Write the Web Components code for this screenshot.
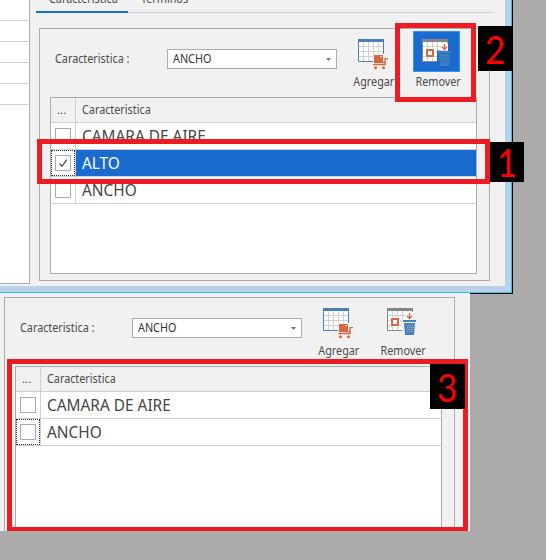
<!DOCTYPE html>
<html lang="es"><head><meta charset="utf-8"><title>Caracteristicas</title>
<style>
html,body{margin:0;height:100%;overflow:hidden;background:#ababab}
body{font-family:"Noto Sans","Open Sans",sans-serif;color:#4c4c4c}
</style></head><body>
<capture-board></capture-board>
<script>
const define=(name,html,init)=>customElements.define(name,class extends HTMLElement{
  connectedCallback(){
    if(this.shadowRoot)return;
    const r=this.attachShadow({mode:'open'});
    r.innerHTML=html;
    if(init)init(this,r);
  }
});

const sheet=(frame)=>`<rect x=".5" y="2" width="25" height="20.5" fill="#fff"/>
<path d="M5.5 3v19M10.5 3v19M15.5 3v19M20.5 3v19M1 7.5h24M1 12.5h24M1 17.5h24" stroke="#d0d0d0"/>
<path d="M.5 3V22.5H25.5V3" fill="none" stroke="${frame}"/><rect width="26" height="3" fill="${frame}"/>`;

define('tight-text',`<style>:host{display:block;width:max-content;font-size:12px;white-space:nowrap;transform:scaleX(.9);transform-origin:var(--origin,0 50%)}</style><slot></slot>`);

define('icon-add',`<style>:host{display:block;width:32px;height:32px}svg{display:block}</style>
<svg width="32" height="32">${sheet('#4a80b8')}
<path d="M15 15h12v4h4v12H15z" fill="var(--icon-back,#f1f1f1)"/>
<path d="M16 16h9v7.5h-9z" fill="#d96542"/><path d="M22 17h2v1h-2z" fill="#fff"/>
<path d="M30 19.6h-2.9V25.6H15M16 23.5h11" fill="none" stroke="#d96542" stroke-width="1.4"/>
<circle cx="17.5" cy="28.7" r="1.5" fill="#d96542"/><circle cx="25.5" cy="28.7" r="1.5" fill="#d96542"/></svg>`);

define('icon-remove',`<style>:host{display:block;width:32px;height:32px}svg{display:block}</style>
<svg width="32" height="32">${sheet('#858585')}
<path d="M3 9h10v10H3z" fill="#fff"/><rect x="5" y="11" width="6" height="6" fill="#fff" stroke="#d96542" stroke-width="2"/>
<path d="M19 4h7v8h-7z" fill="#fff"/>
<path d="M15 11.5h15v11l-2 5H17l-2-5z" fill="var(--icon-back,#f1f1f1)"/><path d="M19 8h7v3.5h-7z" fill="#fff"/>
<path d="M22.5 5v5.5M19.9 7.8l2.6 2.6L25.1 7.8" stroke="#d96542" stroke-width="1.4" fill="none"/>
<path d="M16 12h13v2H16zM17 15h11l-1 12h-9z" fill="var(--bin,#4a80b8)"/>
<path d="M19 17.5h8M20 19.5h7M19 21.5h8M20 23.5h6" stroke="var(--dots,#a9c6df)" stroke-dasharray="1 1" stroke-width=".8"/></svg>`);

define('tool-button',`<style>
:host{display:flex;flex-direction:column;align-items:center;width:64px}
.face{box-sizing:border-box;width:47px;height:41px;padding:7px 0 0 8px;border:1px solid transparent}
:host([active]) .face{background:#1a6bd0;border-color:#3d93f0}
:host([active]){--icon-back:#1a6bd0;--bin:#3e7fbd;--dots:#2268b4}
.text{height:18px;line-height:18px;margin-top:1px;padding-left:4px;white-space:nowrap;--origin:50% 50%}
</style><div class="face"><slot name="icon"></slot></div><div class="text"><tight-text><slot></slot></tight-text></div>`);

define('combo-box',`<style>
:host{box-sizing:border-box;display:flex;align-items:center;justify-content:space-between;width:170px;height:20px;padding:0 5px 0 5px;border:1px solid #ababab;background:#fff;color:#333;line-height:16px}
svg{display:block}
</style><tight-text><slot></slot></tight-text><svg width="5" height="3"><path d="M0 0h5L2.5 3z" fill="#777"/></svg>`);

define('check-box',`<style>
:host{box-sizing:border-box;display:block;width:16px;height:16px;border:1px solid #ababab;background:#fff}
svg{display:none}:host([checked]) svg{display:block}
</style><svg width="14" height="14"><path d="M3.5 7.5l2.6 2.7L10.7 3.6" fill="none" stroke="#555" stroke-width="1.3"/></svg>`);

define('grid-row',`<style>
:host{display:flex;height:26px;border-bottom:1px solid #d0d0d0;font-size:15.4px;line-height:28px;color:#444}
.cell{box-sizing:border-box;width:24px;padding:4px 0 0 3px;border:1px solid transparent}
:host([focused]) .cell{border:1px dotted #333}
.name{flex:1;height:26px;padding-left:6px;border-left:1px solid #d0d0d0;white-space:nowrap}
:host([selected]) .name{background:#1a6bd0;color:#fff}
</style><div class="cell"><check-box></check-box></div><div class="name"><slot></slot></div>`,
(h,r)=>{if(h.hasAttribute('checked'))r.querySelector('check-box').setAttribute('checked','')});

define('data-grid',`<style>
:host{box-sizing:border-box;display:block;width:427px;height:177px;border:1px solid #ababab;background:#fff}
.head{display:flex;height:24px;border-bottom:1px solid #d0d0d0;background:#f1f1f1;font-size:11.5px;line-height:24px}
.dots{width:18px;padding-left:6px}.title{flex:1;padding-left:6px;border-left:1px solid #d0d0d0}
</style><div class="head"><div class="dots">...</div><div class="title"><tight-text>Caracteristica</tight-text></div></div><slot></slot>`);

define('feature-panel',`<style>
:host{box-sizing:border-box;display:block;width:451px;height:253px;border:1px solid #ababab;background:#f1f1f1}
.bar{display:flex;height:68px;align-items:flex-start;padding-left:15px}
.label{width:112px;margin-top:21px;line-height:18px}
combo-box{margin-top:20px}
.tools{display:flex;margin:2px 0 0 3px}
data-grid{margin-left:10px}
</style><div class="bar"><div class="label"><tight-text>Caracteristica :</tight-text></div><combo-box>ANCHO</combo-box>
<div class="tools"><tool-button><icon-add slot="icon"></icon-add>Agregar</tool-button>
<tool-button class="rm"><icon-remove slot="icon"></icon-remove>Remover</tool-button></div></div>
<data-grid><slot></slot></data-grid>`,
(h,r)=>{if(h.hasAttribute('removing'))r.querySelector('.rm').setAttribute('active','')});

define('side-list',`<style>
:host{box-sizing:border-box;display:block;width:30px;height:284px;border:solid #ababab;border-width:0 1px 1px 0;background:#fff}
i{display:block;height:20px;border-bottom:1px solid #d0d0d0}i:first-child{height:10px}
</style><i></i><i></i><i></i><i></i><i></i>`);

define('tab-strip',`<style>
:host{display:flex;width:457px;height:13px;line-height:16px;white-space:nowrap;overflow:hidden}
span{display:block;height:16px;margin-top:-9px}
div{box-sizing:border-box;height:13px;padding-left:13px}
.on{width:92px;border-bottom:2px solid #1a6bd0}.off{flex:1;border-bottom:1px solid #d0d0d0}
</style><div class="on"><span><tight-text>Caracteristica</tight-text></span></div><div class="off"><span><tight-text>Terminos</tight-text></span></div>`);

define('app-window',`<style>
:host{box-sizing:border-box;display:flex;width:513px;height:294px;border:solid #000;border-width:0 1px 1px 0;background:#f1f1f1}
.inner{box-sizing:border-box;display:flex;width:512px;height:293px;border:solid #27c8df;border-width:0 1px 1px 0}
.body{box-sizing:border-box;display:flex;width:511px;height:292px;border:solid #b9d1eb;border-width:0 6px 6px 0}
.main{display:flex;flex-direction:column;padding-left:6px}
feature-panel{margin:15px 0 0 3px}
</style><div class="inner"><div class="body"><side-list></side-list><div class="main"><tab-strip></tab-strip>
<feature-panel removing><slot></slot></feature-panel></div></div></div>`);

define('call-frame',`<style>:host{box-sizing:border-box;position:absolute;border:5px solid #ed1c24}</style>`);
define('call-number',`<style>:host{position:absolute;display:flex;justify-content:center;background:#000;color:#f00;font:38px/47px Lato,"Noto Sans",sans-serif}
span{display:block;transform:scaleX(.92)}</style><span><slot></slot></span>`);

define('capture-board',`<style>
:host{display:block;position:relative;width:546px;height:560px;overflow:hidden;background:#ababab}
.lower{position:relative;box-sizing:border-box;width:470px;height:238px;margin-top:-1px;padding:4px 0 0 4px;overflow:hidden;background:#f1f1f1}
.f1{left:37px;top:139px;width:453px;height:45px}.f2{left:395px;top:23px;width:81px;height:79px}
.f3{left:7px;top:359px;width:461px;height:172px;border-bottom-width:4px}
.n1{left:490px;top:142px;width:34px;height:40px;line-height:40px}.n2{left:478px;top:26px;width:35px;height:45px}
.n3{left:430px;top:364px;width:35px;height:45px}
</style>
<app-window><grid-row>CAMARA DE AIRE</grid-row><grid-row checked focused selected>ALTO</grid-row><grid-row>ANCHO</grid-row></app-window>
<div class="lower"><feature-panel><grid-row>CAMARA DE AIRE</grid-row><grid-row focused>ANCHO</grid-row></feature-panel></div>
<call-frame class="f1"></call-frame><call-frame class="f2"></call-frame><call-frame class="f3"></call-frame>
<call-number class="n1">1</call-number><call-number class="n2">2</call-number><call-number class="n3">3</call-number>`);
</script></body></html>
